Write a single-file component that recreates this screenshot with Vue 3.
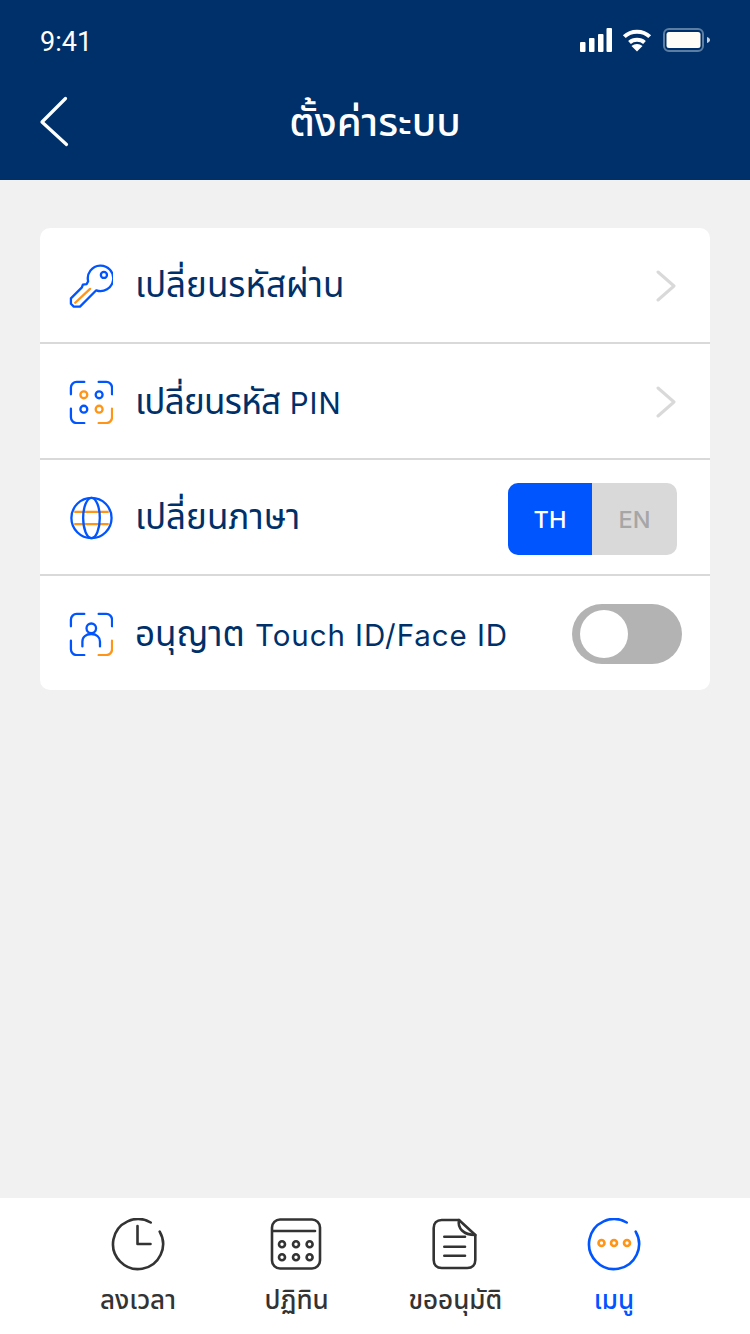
<script setup>
const rows = [
  { label: 'เปลี่ยนรหัสผ่าน', icon: 'key', action: 'chevron' },
  { label: 'เปลี่ยนรหัส', latin: 'PIN', icon: 'pin', action: 'chevron', tight: true },
  { label: 'เปลี่ยนภาษา', icon: 'globe', action: 'lang' },
  { label: 'อนุญาต', latin: 'Touch ID/Face ID', icon: 'face', action: 'switch' }
]
const tabs = [
  { label: 'ลงเวลา', icon: 'clock' },
  { label: 'ปฏิทิน', icon: 'calendar' },
  { label: 'ขออนุมัติ', icon: 'doc' },
  { label: 'เมนู', icon: 'more', active: true }
]
</script>

<template>
  <div class="page">
    <header class="top">
      <div class="status">
        <span class="time">9:41</span>
        <div class="status-icons">
          <svg width="32" height="24" viewBox="0 0 32 24" fill="#fff">
            <rect x="0" y="14" width="5.500" height="10" rx="1" />
            <rect x="9" y="10" width="5.500" height="14" rx="1" />
            <rect x="18" y="6" width="5.500" height="18" rx="1" />
            <rect x="26.500" y="0" width="5.500" height="24" rx="1" />
          </svg>
          <svg width="30" height="24" viewBox="0 0 30 24" fill="none" stroke="#fff" stroke-width="4">
            <path d="M2.300 8.700C9 2 21 2 27.700 8.700" />
            <path d="M7.500 14.500C11.500 10.800 18.500 10.800 22.500 14.500" />
            <path d="M15 23.500l-5.500-5.500c3-2.700 8-2.700 11 0z" fill="#fff" stroke="none" />
          </svg>
          <svg class="battery" width="47" height="24" viewBox="0 0 47 24">
            <rect x="1" y="1" width="39" height="22" rx="5" fill="none" stroke="#5d7ea3" stroke-width="2" />
            <rect x="3.500" y="4" width="34" height="16" rx="2.500" fill="#fffdf5" />
            <path d="M44 9c1.800 .5 3 1.600 3 3s-1.200 2.500-3 3z" fill="#c5d0de" />
          </svg>
        </div>
      </div>
      <div class="nav">
        <svg class="back" width="32" height="52" viewBox="0 0 32 52" fill="none" stroke="#fff" stroke-width="3.200" stroke-linecap="round" stroke-linejoin="round">
          <path d="M26.500 2.500L3 26l24.500 22.500" />
        </svg>
        <h1 class="title">ตั้งค่าระบบ</h1>
      </div>
    </header>

    <main class="content">
      <section class="card">
        <div v-for="row in rows" :key="row.label" class="row">
          <svg class="row-icon" width="44" height="44" viewBox="0 0 46 46" fill="none" stroke-width="2.400" stroke-linecap="round" stroke-linejoin="round">
            <template v-if="row.icon === 'key'">
              <path stroke="#0055ff" d="M28.500 27.500L11.500 44.500H5L2 41.500V36L13.500 24.500L14.500 21.500L18.500 21L20 18A13.300 13.300 0 1 1 28.500 27.500z" />
              <circle stroke="#0055ff" cx="36.500" cy="11.400" r="3.200" />
              <path stroke="#ff9416" d="M6.500 40.500L22 26" />
            </template>
            <template v-else-if="row.icon === 'pin'">
              <path stroke="#0055ff" d="M2 15V8c0-3.300 2.700-6 6-6h8M31 2h8c3.300 0 6 2.700 6 6v7M2 30v9c0 3.300 2.700 6 6 6h8" />
              <path stroke="#ff9416" d="M45 30v9c0 3.300-2.700 6-6 6h-8" />
              <circle stroke="#ff9416" cx="15.500" cy="15.500" r="3.600" />
              <circle stroke="#0055ff" cx="31.500" cy="15.500" r="3.600" />
              <circle stroke="#0055ff" cx="15.500" cy="30.500" r="3.600" />
              <circle stroke="#ff9416" cx="31.500" cy="30.500" r="3.600" />
            </template>
            <template v-else-if="row.icon === 'globe'">
              <path stroke="#ff9416" stroke-linecap="butt" d="M5.500 16.700h36M5.500 29.500h36" />
              <circle stroke="#0055ff" cx="23.500" cy="23" r="21" />
              <ellipse stroke="#0055ff" cx="23.500" cy="23" rx="8.700" ry="21" />
            </template>
            <template v-else>
              <path stroke="#0055ff" d="M2 15V8c0-3.300 2.700-6 6-6h8M31 2h8c3.300 0 6 2.700 6 6v7M2 30v9c0 3.300 2.700 6 6 6h8" />
              <path stroke="#ff9416" d="M45 30v9c0 3.300-2.700 6-6 6h-8" />
              <circle stroke="#0055ff" cx="23.300" cy="17" r="5" />
              <path stroke="#0055ff" d="M14 36v-5c0-5 4-8 9.200-8s9.200 3 9.200 8v5" />
            </template>
          </svg>
          <span class="row-label" :class="{ tight: row.tight }">{{ row.label }} <span v-if="row.latin" class="latin">{{ row.latin }}</span></span>
          <svg v-if="row.action === 'chevron'" class="chevron" width="20" height="32" viewBox="0 0 20 32" fill="none" stroke="#d9d9d9" stroke-width="3" stroke-linecap="round" stroke-linejoin="round">
            <path d="M2 2l16 14L2 30" />
          </svg>
          <div v-else-if="row.action === 'lang'" class="lang">
            <span class="lang-on">TH</span>
            <span class="lang-off">EN</span>
          </div>
          <div v-else class="switch"><span class="knob"></span></div>
        </div>
      </section>
    </main>

    <nav class="tabbar">
      <div v-for="tab in tabs" :key="tab.label" class="tab" :class="{ active: tab.active }">
        <svg width="54" height="54" viewBox="0 0 54 54" fill="none" stroke="#333" stroke-width="2.600" stroke-linecap="round" stroke-linejoin="round">
          <template v-if="tab.icon === 'clock'">
            <path d="M39.700 4.500A25 25 0 1 0 48.700 13.600" />
            <path d="M26.500 8v18h13" />
          </template>
          <template v-else-if="tab.icon === 'calendar'">
            <rect x="2" y="1.500" width="48" height="49" rx="8" />
            <path d="M3 13h42" />
            <circle cx="12" cy="26.300" r="3" />
            <circle cx="26" cy="26.300" r="3" />
            <circle cx="39.600" cy="26.300" r="3" />
            <circle cx="12" cy="39.300" r="3" />
            <circle cx="26" cy="39.300" r="3" />
            <circle cx="39.600" cy="39.300" r="3" />
          </template>
          <template v-else-if="tab.icon === 'doc'">
            <path d="M31 2H13.700C8.700 2 5.700 5 5.700 10v32c0 5 3 8 8 8h25.600c5 0 8-3 8-8V17z" />
            <path d="M31 2c-1 5 .5 8 3 10.500s7 4.500 13.300 4.500" />
            <path d="M16.300 18.700H37M16.300 28.700H37M16.300 37.700H37" />
          </template>
          <template v-else>
            <path stroke="#0055ff" d="M39.700 4.500A25 25 0 1 0 48.700 13.600" />
            <circle stroke="#ff9416" cx="14.500" cy="25" r="3" />
            <circle stroke="#ff9416" cx="27" cy="25" r="3" />
            <circle stroke="#ff9416" cx="40" cy="25" r="3" />
          </template>
        </svg>
        <span class="tab-label">{{ tab.label }}</span>
      </div>
    </nav>
  </div>
</template>

<style>
body {
  margin: 0;
  background: #f1f1f1;
}
</style>

<style scoped>
.page {
  width: 750px;
  height: 1334px;
  display: flex;
  flex-direction: column;
  background: #f1f1f1;
  font-family: "Noto Sans Thai", Inter, "Noto Sans", sans-serif;
  overflow: hidden;
}
.top {
  height: 180px;
  background: #003069;
  color: #fff;
  box-sizing: border-box;
  padding: 22px 40px 0;
}
.status {
  height: 36px;
  display: flex;
  align-items: center;
  justify-content: space-between;
}
.time {
  font-family: Roboto, "Liberation Sans", sans-serif;
  font-size: 27px;
  margin-top: 4px;
}
.status-icons {
  display: flex;
  align-items: center;
  gap: 10px;
}
.battery {
  margin-left: 1px;
}
.nav {
  margin-top: 35px;
  height: 62px;
  display: flex;
  align-items: center;
  justify-content: center;
  position: relative;
}
.back {
  position: absolute;
  left: -1px;
  top: 3px;
}
.title {
  margin: 0;
  font-size: 40px;
  font-weight: 500;
  line-height: 62px;
}
.content {
  flex: 1;
  padding: 48px 40px 0;
}
.card {
  background: #fff;
  border-radius: 10px;
  overflow: hidden;
}
.row {
  height: 112px;
  display: flex;
  align-items: center;
  padding: 2px 34px 0 29px;
  border-bottom: 2px solid #d9d9d9;
}
.row:last-child {
  border-bottom: none;
  padding-right: 28px;
}
.row-icon {
  flex: none;
  margin-right: 22px;
}
.row-label {
  flex: 1;
  color: #003069;
  font-size: 35px;
  margin-top: 2px;
  line-height: 50px;
}
.row-label.tight {
  letter-spacing: -0.7px;
}
.latin {
  font-family: Inter, sans-serif;
  font-size: 29.500px;
  letter-spacing: 0.950px;
  margin-left: 1px;
}
.lang {
  display: flex;
  width: 169px;
  height: 72px;
  margin: 2px -1px 0 0;
  border-radius: 10px;
  overflow: hidden;
  font-family: Inter, sans-serif;
  font-size: 23.500px;
  font-weight: 500;
}
.lang span {
  display: flex;
  align-items: center;
  justify-content: center;
}
.lang-on {
  width: 84px;
  background: #0055ff;
  color: #fff;
}
.lang-off {
  flex: 1;
  background: #d9d9d9;
  color: #a6a6a6;
}
.switch {
  width: 110px;
  height: 60px;
  border-radius: 30px;
  background: #b3b3b3;
  display: flex;
  align-items: center;
  padding-left: 8px;
  box-sizing: border-box;
}
.knob {
  width: 48px;
  height: 48px;
  border-radius: 50%;
  background: #fff;
}
.tabbar {
  height: 136px;
  background: #fff;
  display: grid;
  grid-template-columns: repeat(4, 158.670px);
  justify-content: center;
  padding: 20px 0 0 2px;
  box-sizing: border-box;
}
.tab {
  display: flex;
  flex-direction: column;
  align-items: center;
  color: #333;
}
.tab.active {
  color: #0055ff;
}
.tab-label {
  font-size: 26px;
  font-weight: 500;
  margin-top: 11px;
  line-height: 36px;
}
</style>
